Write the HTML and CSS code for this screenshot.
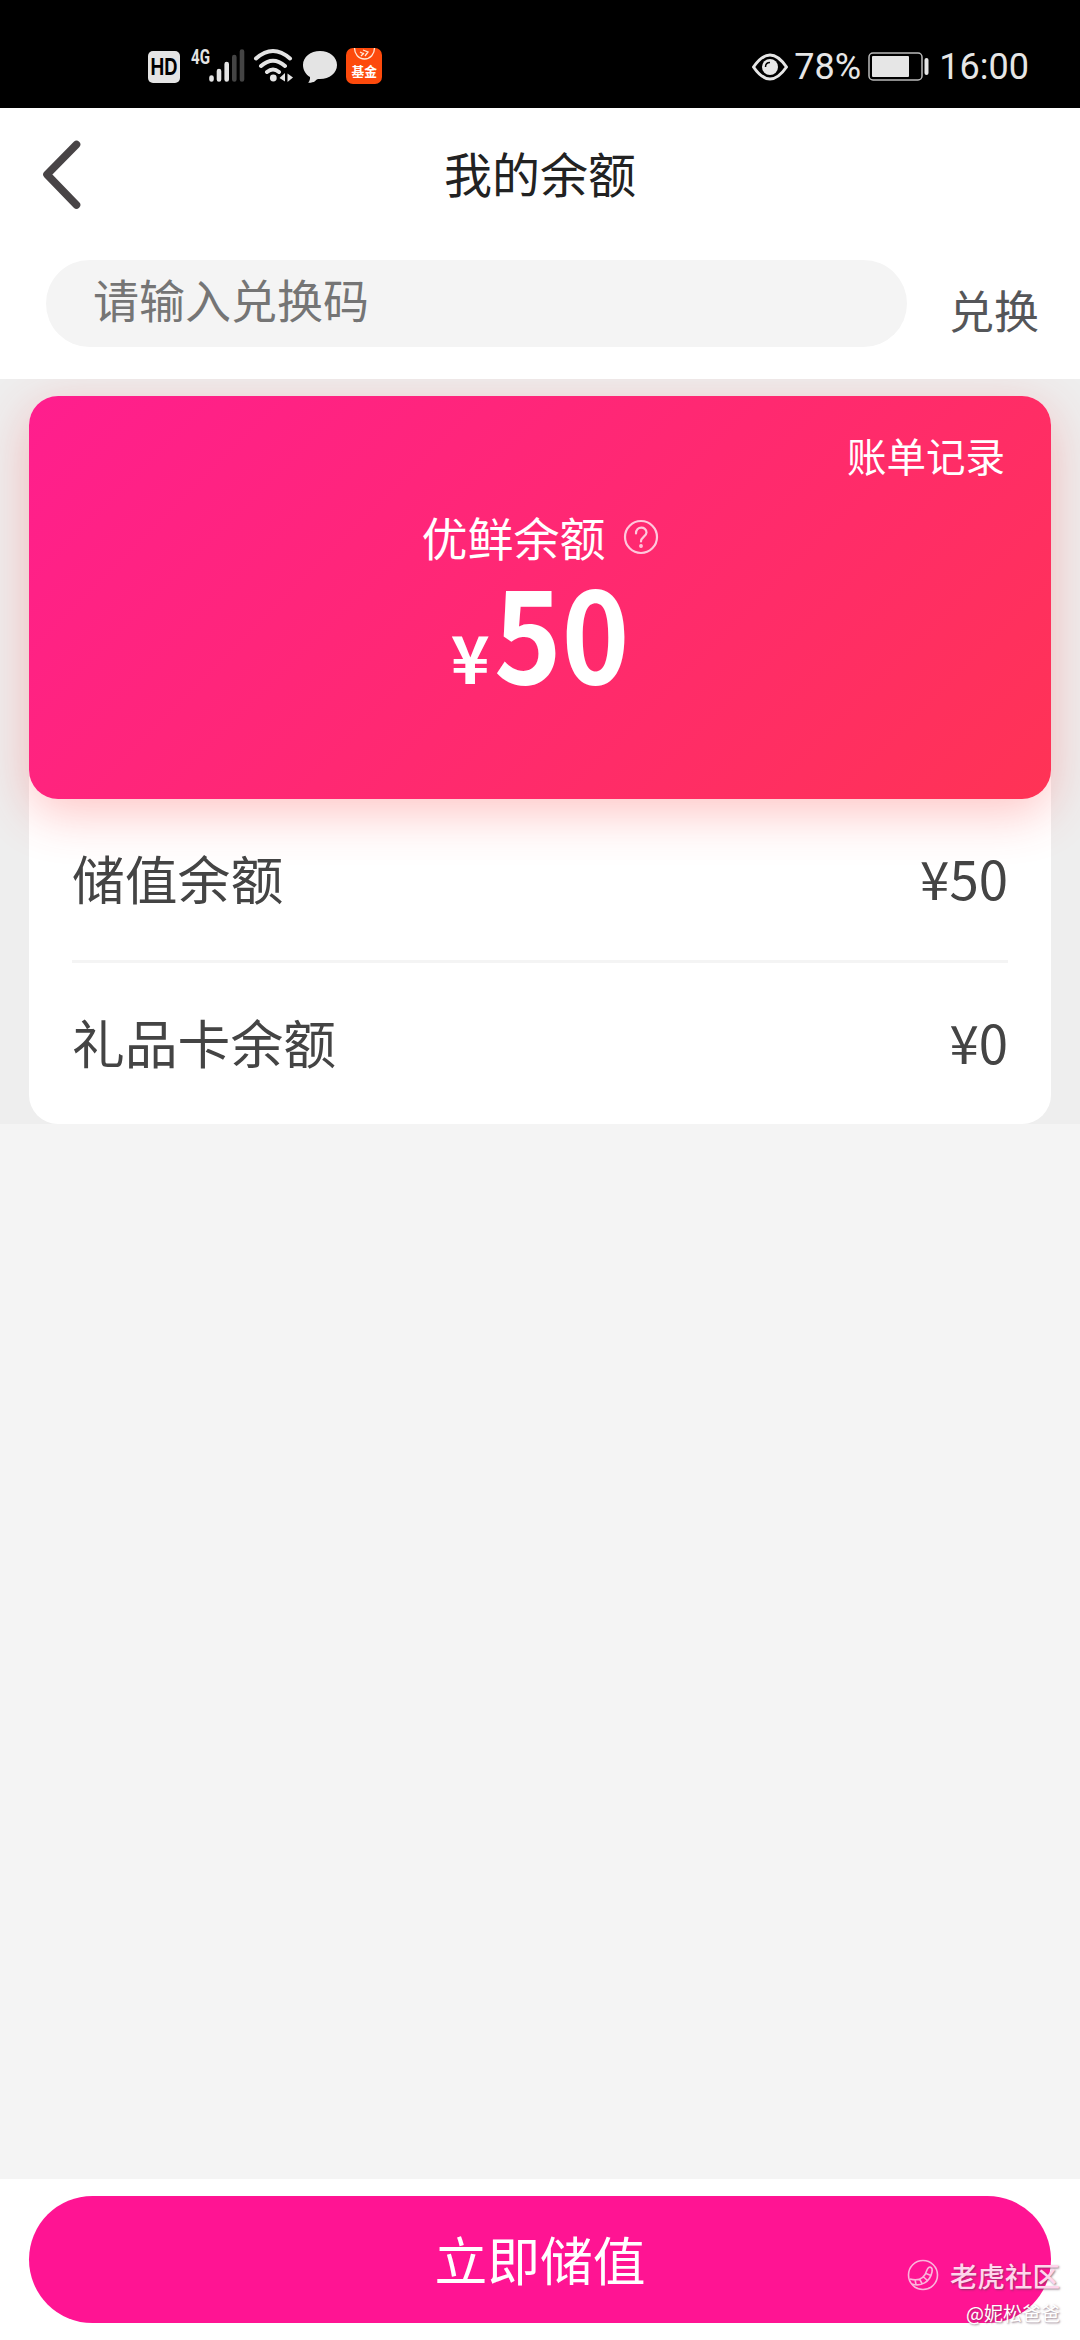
FILE: index.html
```html
<!DOCTYPE html>
<html lang="zh-CN">
<head>
<meta charset="utf-8">
<title>我的余额</title>
<link rel="stylesheet" href="styles.css">
</head>
<body>
<div class="screen">
  <div class="status">
    <svg class="status-icons" width="242" height="44" viewBox="144 44 242 44" fill="#e4e4e4">
      <rect x="148" y="51" width="32" height="32" rx="5"/>
      <text class="hd" x="150.5" y="74.500" textLength="27" lengthAdjust="spacingAndGlyphs" fill="#000">HD</text>
      <text class="net" x="191" y="64" textLength="19" lengthAdjust="spacingAndGlyphs">4G</text>
      <g stroke="#e4e4e4" stroke-width="4.6" stroke-linecap="round">
        <path d="M211.500 77.500v2M219 71v8.500M226.700 64v15.500"/>
        <path d="M234.300 57v22.500M242 51.500v28" stroke="#444"/>
      </g>
      <g fill="none" stroke="#e4e4e4" stroke-width="4" stroke-linecap="round">
        <path d="M256 58.500Q273 43.500 290 58.500M261 66Q273 55.500 285 66M267 72Q273 67 279 72"/>
      </g>
      <circle cx="273.300" cy="78" r="3.400"/>
      <path d="M285 73v8.500l-5.500-3.500zM287.500 82v-8.500l5.500 4z"/>
      <path d="M320 51c9.500 0 17 6 17 14s-7.500 14-17 14c-2 0-3.500 0-5 2.200-2.200 1.300-5.500 1.800-6.800 1.300 1.500-1.200 2-3.500 1.800-5.500-4.500-2.700-7-7-7-12 0-8 7.500-14 17-14z"/>
      <rect x="346" y="48" width="36" height="36" rx="7" fill="#fd4a0c"/>
      <path d="M354.500 48c0 6 4 11 10 11s10-5 10-11M360 52l4 2M363 50l5 2-3 4M361 56l3-3" fill="none" stroke="#ffe9d8" stroke-width="1.300"/>
      <text class="fund" x="351.500" y="76" textLength="25.500" lengthAdjust="spacingAndGlyphs" fill="#fff">基金</text>
    </svg>
    <div class="status-right">
      <svg class="eye" width="38" height="30" viewBox="0 0 38 30"><path d="M2.500 15Q19-9 35.500 15Q19 39 2.500 15Z" fill="none" stroke="#e6e6e6" stroke-width="3" stroke-linejoin="round"/><circle cx="19" cy="15" r="8" fill="#e6e6e6"/><path d="M14.500 15q0-4.500 4.500-4.500" fill="none" stroke="#000" stroke-width="1.500"/></svg>
      <span class="pct">78%</span>
      <svg class="battery" width="62" height="30" viewBox="0 0 62 30"><rect x="1" y="1" width="53" height="27" rx="4" fill="none" stroke="#bbb" stroke-width="1.500"/><rect x="4" y="4" width="37" height="21" rx="1" fill="#e6e6e6"/><rect x="56.500" y="6" width="4" height="17" rx="2" fill="#e6e6e6"/></svg>
      <span class="clock">16:00</span>
    </div>
  </div>
  <header class="head">
    <svg class="back" width="44" height="74" viewBox="0 0 44 74"><path d="M36.500 6.500L7 36.500L36.500 67" fill="none" stroke="#484446" stroke-width="7.600" stroke-linecap="round" stroke-linejoin="round"/></svg>
    <h1 class="title">我的余额</h1>
  </header>
  <div class="redeem">
    <div class="field">请输入兑换码</div>
    <div class="redeem-btn">兑换</div>
  </div>
  <main class="wallet">
    <section class="panel">
      <div class="card">
        <div class="bill">账单记录</div>
        <div class="label">优鲜余额<svg class="help" width="36" height="36" viewBox="0 0 36 36" fill="none" stroke="#ffc8dc" stroke-width="2.200" stroke-linecap="round"><circle cx="18" cy="18" r="16"/><path d="M13 14.500C13 6.500 23.500 7 23.500 13.500C23.500 17.500 18 18 18 22.500"/><circle cx="18" cy="27" r=".8"/></svg></div>
        <div class="amount"><span class="yen">¥</span><span class="num">50</span></div>
      </div>
      <div class="rows">
        <div class="row"><span>储值余额</span><span>¥50</span></div>
        <div class="row"><span>礼品卡余额</span><span>¥0</span></div>
      </div>
    </section>
  </main>
  <footer class="foot"><div class="cta">立即储值</div></footer>
  <div class="mark">
    <div class="mark-top">
      <svg width="32" height="32" viewBox="0 0 32 32" fill="none" stroke="#fbb5dc" stroke-width="1.600"><circle cx="16" cy="16" r="14.500"/><path d="M3 20c7 2 14 1 17-9 2-5 6-3 5 2-2 10-11 15-20 12M8 20.500l1 5M12.500 20l2.500 4.500M16.500 18l4 3.500M19 14.500l5 2"/></svg>
      <span>老虎社区</span>
    </div>
    <div class="mark-user">@妮松爸爸</div>
  </div>
</div>
</body>
</html>
```
FILE: styles.css
```css
* { box-sizing: border-box; }
body { margin: 0; font-family: "Noto Sans CJK SC", sans-serif; }
.screen { position: relative; width: 1080px; height: 2340px; display: flex; flex-direction: column; background: #f4f4f4; overflow: hidden; }
.status { height: 108px; flex: none; background: #000; display: flex; justify-content: space-between; align-items: flex-start; padding: 44px 51px 0 144px; }
.hd { font: 700 23px Inter, sans-serif; }
.net { font: 700 20px Roboto, sans-serif; }
.fund { font: 700 13px "Noto Sans CJK SC", sans-serif; }
.status-right { display: flex; align-items: center; height: 46px; color: #e6e6e6; font: 36px/46px Roboto, sans-serif; }
.pct { margin-left: 5px; width: 70px; }
.battery { margin-left: 4px; }
.clock { margin-left: 9px; }
.head { height: 134px; flex: none; background: #fff; display: grid; grid-template-columns: 96px 1fr 96px; align-items: center; }
.back { margin-left: 40px; }
.title { margin: 0; padding-bottom: 6px; text-align: center; font-weight: 400; font-size: 48px; line-height: 72px; color: #222; }
.redeem { height: 137px; flex: none; background: #fff; display: flex; align-items: flex-start; padding: 18px 41px 0 46px; }
.field { width: 861px; height: 87px; border-radius: 44px; background: #f4f4f4; color: #757575; font-size: 46px; line-height: 76px; padding-left: 47px; }
.redeem-btn { margin-left: auto; color: #555659; font-size: 45px; line-height: 100px; }
.wallet { height: 745px; flex: none; background: #eee; padding: 17px 29px 0; overflow: hidden; }
.panel { height: 728px; border-radius: 29px; background: #fff; }
.card { height: 403px; border-radius: 29px; background: linear-gradient(135deg, #ff1e8e, #ff3355); box-shadow: 0 14px 50px rgba(255, 60, 60, .3); color: #fff; display: flex; flex-direction: column; align-items: center; }
.bill { align-self: flex-end; margin: 29px 46px 0 0; font-size: 39.5px; line-height: 60px; }
.label { display: flex; align-items: center; margin-top: 16px; font-size: 46px; line-height: 70px; }
.help { margin: 1px 0 0 17px; }
.amount { display: flex; align-items: baseline; margin-top: -7px; font-weight: 700; line-height: 130px; }
.yen { font-size: 66px; margin-right: 4px; }
.num { font-size: 126px; transform: scaleX(.91); transform-origin: left; margin-right: -13px; }
.rows { padding: 0 43px; color: #444; font-size: 52.8px; }
.row { display: flex; justify-content: space-between; align-items: center; height: 161px; padding-bottom: 5px; }
.row + .row { border-top: 3px solid #f4f4f4; height: 164px; }
.foot { margin-top: auto; height: 161px; flex: none; background: #fff; padding: 17px 29px; }
.cta { height: 127px; border-radius: 64px; background: #ff1493; color: #fff; font-size: 52.8px; line-height: 124px; text-align: center; }
.mark { position: absolute; right: 20px; bottom: 13px; color: #ffd5ec; text-shadow: 1px 1px 2px rgba(90, 60, 80, .65); display: flex; flex-direction: column; align-items: flex-end; }
.mark-top { display: flex; align-items: center; gap: 11px; font-size: 27.5px; font-weight: 500; line-height: 42px; }
.mark-user { font-size: 19px; line-height: 28px; margin-top: 3px; color: #fff; }
```
